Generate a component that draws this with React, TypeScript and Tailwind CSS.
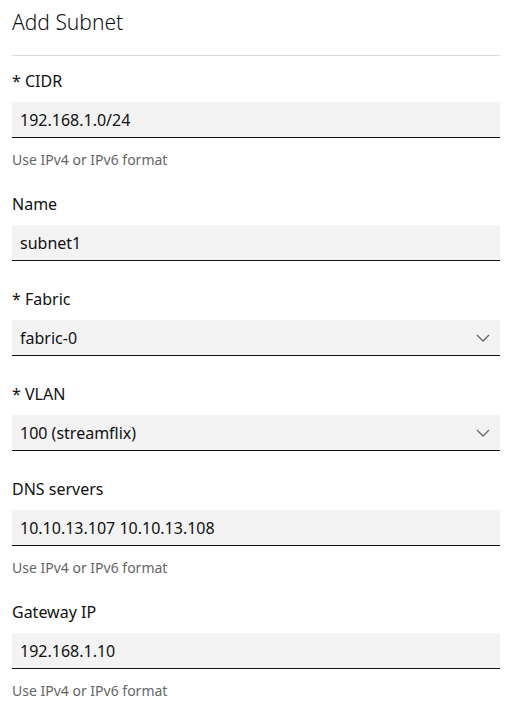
import React from 'react';

type FieldProps = {
  label: string;
  value: string;
  select?: boolean;
  help?: string;
  mb?: string;
};

const Chevron: React.FC = () => (
  <svg width="14" height="8" viewBox="0 0 14 8" fill="none" className="shrink-0">
    <path d="M1 1l6 6 6-6" stroke="#666" strokeWidth="1.3" />
  </svg>
);

const Field: React.FC<FieldProps> = ({ label, value, select, help, mb }) => (
  <div className={`flex flex-col ${mb ?? ''}`}>
    <label className="text-[16px] leading-6 text-[#111] mb-[9px]">{label}</label>
    <div className="h-[36px] bg-[#f3f3f3] border-b border-[#111] flex items-center justify-between pl-2 pr-[10px]">
      <span className="text-[16px] leading-6 text-[#111]">{value}</span>
      {select && <Chevron />}
    </div>
    {help && <p className="mt-[12px] text-[14px] leading-5 text-[#666]">{help}</p>}
  </div>
);

export default function App() {
  return (
    <div className="bg-white min-h-[703px] font-['Noto_Sans',sans-serif]">
      <div className="ml-3 w-[488px] pt-2">
        {/* header */}
        <h1 className="text-[21px] leading-7 text-[#111] font-light">Add Subnet</h1>
        <hr className="mt-[19px] border-0 h-px bg-[#d9d9d9] mb-[13px]" />

        {/* form */}
        <Field label="* CIDR" value="192.168.1.0/24" help="Use IPv4 or IPv6 format" mb="mb-[22px]" />
        <Field label="Name" value="subnet1" mb="mb-[26px]" />
        <Field label="* Fabric" value="fabric-0" select mb="mb-[26px]" />
        <Field label="* VLAN" value="100 (streamflix)" select mb="mb-[26px]" />
        <Field label="DNS servers" value="10.10.13.107 10.10.13.108" help="Use IPv4 or IPv6 format" mb="mb-[22px]" />
        <Field label="Gateway IP" value="192.168.1.10" help="Use IPv4 or IPv6 format" />
      </div>
    </div>
  );
}
